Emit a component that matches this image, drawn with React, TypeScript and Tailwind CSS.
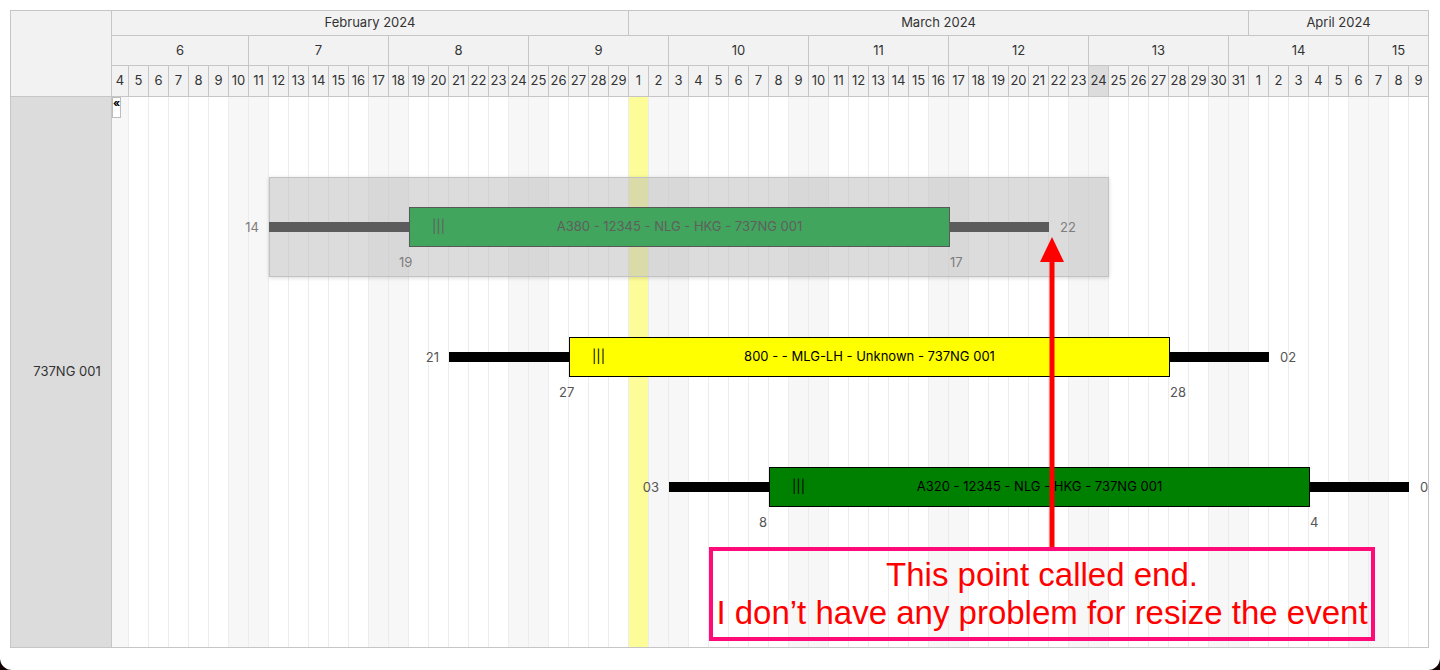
import React from 'react';

type Day = { d: number; idx: number };

const buildDays = (): Day[] => {
  const out: Day[] = [];
  let idx = 0;
  for (let d = 4; d <= 29; d++) out.push({ d, idx: idx++ });
  for (let d = 1; d <= 31; d++) out.push({ d, idx: idx++ });
  for (let d = 1; d <= 9; d++) out.push({ d, idx: idx++ });
  return out;
};

const days = buildDays();
const LAST = days.length - 1;
const TODAY = 26; // Mar 1
const CURRENT = 49; // Mar 24

const months = [
  { label: 'February 2024', w: 'w-[517px] border-r' },
  { label: 'March 2024', w: 'w-[620px] border-r' },
  { label: 'April 2024', w: 'w-[179px]' },
];

const weeks = [
  { n: 6, w: 'w-[137px] border-r' },
  { n: 7, w: 'w-[140px] border-r' },
  { n: 8, w: 'w-[140px] border-r' },
  { n: 9, w: 'w-[140px] border-r' },
  { n: 10, w: 'w-[140px] border-r' },
  { n: 11, w: 'w-[140px] border-r' },
  { n: 12, w: 'w-[140px] border-r' },
  { n: 13, w: 'w-[140px] border-r' },
  { n: 14, w: 'w-[140px] border-r' },
  { n: 15, w: 'w-[59px]' },
];

const cellWidth = (i: number) =>
  i === 0 ? 'w-[17px] border-r' : i === LAST ? 'w-[19px]' : 'w-[20px] border-r';

// x offset inside the timeline for the start of a day column
const dx = (idx: number) => idx * 20 - 3;

type Ev = {
  from: number;
  start: number;
  end: number;
  to: number;
  top: number;
  labels: [string, string, string, string];
  text: string;
  bar: string;
  line: string;
  ink: string;
  side: string;
};

const events: Ev[] = [
  {
    from: 8, start: 15, end: 42, to: 47, top: 110,
    labels: ['14', '19', '17', '22'],
    text: 'A380 - 12345 - NLG - HKG - 737NG 001',
    bar: 'bg-[#42a55d] border-[#585858]',
    line: 'bg-[#5c5c5c]',
    ink: 'text-[#5f5f5f]',
    side: 'text-[#7d7d7d]',
  },
  {
    from: 17, start: 23, end: 53, to: 58, top: 240,
    labels: ['21', '27', '28', '02'],
    text: '800 - - MLG-LH - Unknown - 737NG 001',
    bar: 'bg-[#ffff00] border-black',
    line: 'bg-black',
    ink: 'text-black',
    side: 'text-[#555]',
  },
  {
    from: 28, start: 33, end: 60, to: 65, top: 370,
    labels: ['03', '8', '4', '09'],
    text: 'A320 - 12345 - NLG - HKG - 737NG 001',
    bar: 'bg-[#008000] border-black',
    line: 'bg-black',
    ink: 'text-black',
    side: 'text-[#555]',
  },
];

const EventBar: React.FC<{ ev: Ev }> = ({ ev }) => {
  const L = dx(ev.from);
  const B = dx(ev.start);
  const E = dx(ev.end);
  const R = dx(ev.to);
  return (
    <>
      <div className={`absolute text-[13px] leading-[16px] ${ev.side}`} style={{ left: L - 40, top: ev.top + 12, width: 30, textAlign: 'right' }}>
        {ev.labels[0]}
      </div>
      <div className={`absolute h-[10px] ${ev.line}`} style={{ left: L, top: ev.top + 15, width: B - L }} />
      <div
        className={`absolute h-[40px] border flex items-center ${ev.bar} ${ev.ink} text-[13px]`}
        style={{ left: B, top: ev.top, width: E - B + 1 }}
      >
        <span className="absolute left-[22px]">|||</span>
        <span className="flex-1 text-center">{ev.text}</span>
      </div>
      <div className={`absolute h-[10px] ${ev.line}`} style={{ left: E, top: ev.top + 15, width: R - E }} />
      <div className={`absolute text-[13px] leading-[16px] ${ev.side}`} style={{ left: R + 11, top: ev.top + 12 }}>
        {ev.labels[3]}
      </div>
      <div className={`absolute text-[13px] leading-[16px] ${ev.side}`} style={{ left: B - 10, top: ev.top + 47 }}>
        {ev.labels[1]}
      </div>
      <div className={`absolute text-[13px] leading-[16px] ${ev.side}`} style={{ left: E + 1, top: ev.top + 47 }}>
        {ev.labels[2]}
      </div>
    </>
  );
};

const App: React.FC = () => {
  return (
    <div className="w-[1440px] h-[670px] bg-[#120303] font-['Inter',sans-serif] text-[#333]">
      <div className="relative w-full h-full bg-white rounded-b-[12px] pt-[10px] pl-[10px]">
        {/* Scheduler frame */}
        <div className="flex w-[1419px] border border-[#c6c6c6]">
          {/* Resource column */}
          <div className="w-[101px] shrink-0 flex flex-col">
            <div className="h-[86px] bg-[#f2f2f2] border-b border-r border-[#c6c6c6]" />
            <div className="h-[550px] bg-[#dcdcdc] border-r border-[#c6c6c6] flex items-center justify-center pl-3 text-[13px] text-[#333]">
              737NG 001
            </div>
          </div>

          {/* Timeline */}
          <div className="flex-1 flex flex-col overflow-hidden">
            <div className="flex h-[25px] bg-[#f2f2f2] border-b border-[#c6c6c6]">
              {months.map(m => (
                <div key={m.label} className={`${m.w} shrink-0 border-[#c6c6c6] flex items-center justify-center text-[13px]`}>
                  {m.label}
                </div>
              ))}
            </div>
            <div className="flex h-[30px] bg-[#f2f2f2] border-b border-[#c6c6c6]">
              {weeks.map(w => (
                <div key={w.n} className={`${w.w} shrink-0 border-[#c6c6c6] flex items-center justify-center text-[13px]`}>
                  {w.n}
                </div>
              ))}
            </div>
            <div className="flex h-[31px] bg-[#f2f2f2] border-b border-[#c6c6c6]">
              {days.map(day => (
                <div
                  key={day.idx}
                  className={`${cellWidth(day.idx)} shrink-0 border-[#c6c6c6] flex items-center justify-center text-[13px] ${day.idx === CURRENT ? 'bg-[#dcdcdc]' : ''}`}
                >
                  {day.d}
                </div>
              ))}
            </div>

            {/* Body */}
            <div className="relative h-[550px] flex">
              {days.map(day => {
                const dow = day.idx % 7;
                const bg = day.idx === TODAY ? 'bg-[#fcfc99]' : dow === 0 || dow === 6 ? 'bg-[#f7f7f7]' : 'bg-white';
                return <div key={day.idx} className={`${cellWidth(day.idx)} shrink-0 h-full border-[#ececec] ${bg}`} />;
              })}

              <div className="absolute left-0 top-0 w-[9px] h-[21px] border border-[#bdbdbd] bg-white text-[11px] leading-[11px] font-bold text-black flex justify-center">
                «
              </div>

              {/* drag ghost */}
              <div className="absolute left-[157px] top-[80px] w-[840px] h-[100px] border border-[#c2c2c2] bg-[rgba(185,185,185,0.5)] shadow-[0_1px_4px_rgba(0,0,0,0.15)]" />

              {events.map((ev, i) => (
                <EventBar key={i} ev={ev} />
              ))}
            </div>
          </div>
        </div>

        {/* annotation arrow */}
        <svg className="absolute left-[1030px] top-[230px]" width="40" height="320" viewBox="0 0 40 320">
          <polygon points="22,7 10,32 34,32" fill="#ff0000" />
          <rect x="19.5" y="30" width="5" height="287" fill="#ff0000" />
        </svg>

        {/* annotation callout */}
        <div className="absolute left-[709px] top-[547px] w-[666px] h-[94px] border-4 border-[#ff0a78] flex flex-col items-center justify-center font-['Liberation_Sans',Arial,sans-serif] text-[33px] leading-[38px] text-[#ff0000]">
          <div>This point called end.</div>
          <div>I don’t have any problem for resize the event</div>
        </div>
      </div>
    </div>
  );
};

export default App;
